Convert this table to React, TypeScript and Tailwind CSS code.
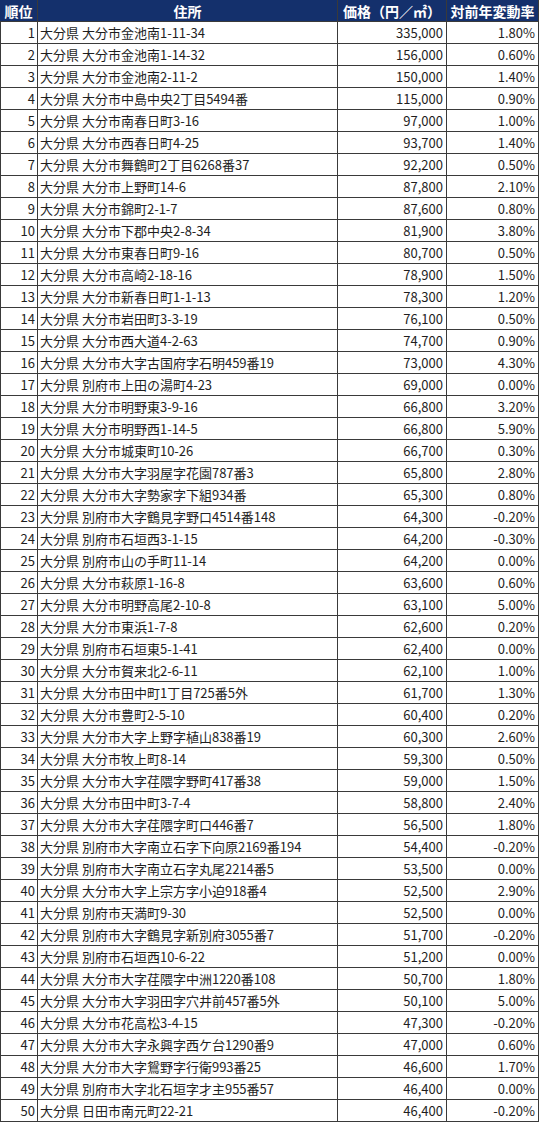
const rows: [string, string, string][] = [
  ["大分県 大分市金池南1-11-34", "335,000", "1.80%"],
  ["大分県 大分市金池南1-14-32", "156,000", "0.60%"],
  ["大分県 大分市金池南2-11-2", "150,000", "1.40%"],
  ["大分県 大分市中島中央2丁目5494番", "115,000", "0.90%"],
  ["大分県 大分市南春日町3-16", "97,000", "1.00%"],
  ["大分県 大分市西春日町4-25", "93,700", "1.40%"],
  ["大分県 大分市舞鶴町2丁目6268番37", "92,200", "0.50%"],
  ["大分県 大分市上野町14-6", "87,800", "2.10%"],
  ["大分県 大分市錦町2-1-7", "87,600", "0.80%"],
  ["大分県 大分市下郡中央2-8-34", "81,900", "3.80%"],
  ["大分県 大分市東春日町9-16", "80,700", "0.50%"],
  ["大分県 大分市高崎2-18-16", "78,900", "1.50%"],
  ["大分県 大分市新春日町1-1-13", "78,300", "1.20%"],
  ["大分県 大分市岩田町3-3-19", "76,100", "0.50%"],
  ["大分県 大分市西大道4-2-63", "74,700", "0.90%"],
  ["大分県 大分市大字古国府字石明459番19", "73,000", "4.30%"],
  ["大分県 別府市上田の湯町4-23", "69,000", "0.00%"],
  ["大分県 大分市明野東3-9-16", "66,800", "3.20%"],
  ["大分県 大分市明野西1-14-5", "66,800", "5.90%"],
  ["大分県 大分市城東町10-26", "66,700", "0.30%"],
  ["大分県 大分市大字羽屋字花園787番3", "65,800", "2.80%"],
  ["大分県 大分市大字勢家字下組934番", "65,300", "0.80%"],
  ["大分県 別府市大字鶴見字野口4514番148", "64,300", "-0.20%"],
  ["大分県 別府市石垣西3-1-15", "64,200", "-0.30%"],
  ["大分県 別府市山の手町11-14", "64,200", "0.00%"],
  ["大分県 大分市萩原1-16-8", "63,600", "0.60%"],
  ["大分県 大分市明野高尾2-10-8", "63,100", "5.00%"],
  ["大分県 大分市東浜1-7-8", "62,600", "0.20%"],
  ["大分県 別府市石垣東5-1-41", "62,400", "0.00%"],
  ["大分県 大分市賀来北2-6-11", "62,100", "1.00%"],
  ["大分県 大分市田中町1丁目725番5外", "61,700", "1.30%"],
  ["大分県 大分市豊町2-5-10", "60,400", "0.20%"],
  ["大分県 大分市大字上野字植山838番19", "60,300", "2.60%"],
  ["大分県 大分市牧上町8-14", "59,300", "0.50%"],
  ["大分県 大分市大字荏隈字野町417番38", "59,000", "1.50%"],
  ["大分県 大分市田中町3-7-4", "58,800", "2.40%"],
  ["大分県 大分市大字荏隈字町口446番7", "56,500", "1.80%"],
  ["大分県 別府市大字南立石字下向原2169番194", "54,400", "-0.20%"],
  ["大分県 別府市大字南立石字丸尾2214番5", "53,500", "0.00%"],
  ["大分県 大分市大字上宗方字小迫918番4", "52,500", "2.90%"],
  ["大分県 別府市天満町9-30", "52,500", "0.00%"],
  ["大分県 別府市大字鶴見字新別府3055番7", "51,700", "-0.20%"],
  ["大分県 別府市石垣西10-6-22", "51,200", "0.00%"],
  ["大分県 大分市大字荏隈字中洲1220番108", "50,700", "1.80%"],
  ["大分県 大分市大字羽田字穴井前457番5外", "50,100", "5.00%"],
  ["大分県 大分市花高松3-4-15", "47,300", "-0.20%"],
  ["大分県 大分市大字永興字西ケ台1290番9", "47,000", "0.60%"],
  ["大分県 大分市大字鴛野字行衛993番25", "46,600", "1.70%"],
  ["大分県 別府市大字北石垣字才主955番57", "46,400", "0.00%"],
  ["大分県 日田市南元町22-21", "46,400", "-0.20%"],
];

export default function App() {
  return (
    <div
      className="w-[540px] bg-white text-[13px] text-[#1e1e1e]"
      style={{ fontFamily: '"Noto Sans CJK JP", "Noto Sans", sans-serif' }}
    >
      <div className="grid grid-cols-[38px_300px_109px_92px] leading-none">
        {/* header */}
        <div className="flex h-[22px] items-center justify-center border-b border-r border-[#3a3a3a] bg-[#14306c] text-[14px] font-bold text-white">
          順位
        </div>
        <div className="flex h-[22px] items-center justify-center border-b border-r border-[#3a3a3a] bg-[#14306c] text-[14px] font-bold text-white">
          住所
        </div>
        <div className="flex h-[22px] items-center justify-center border-b border-r border-[#3a3a3a] bg-[#14306c] text-[14px] font-bold text-white">
          価格（円／㎡）
        </div>
        <div className="flex h-[22px] items-center justify-center border-b border-r border-[#3a3a3a] bg-[#14306c] text-[14px] font-bold text-white">
          対前年変動率
        </div>

        {rows.map(([addr, price, rate], i) => (
          <div key={i} className="contents">
            <div className="flex h-[22px] items-center justify-end border-b border-l border-r border-[#3a3a3a] pr-[2px]">
              {i + 1}
            </div>
            <div className="flex h-[22px] items-center overflow-hidden whitespace-nowrap border-b border-r border-[#3a3a3a] pl-[2px]">
              {addr}
            </div>
            <div className="flex h-[22px] items-center justify-end border-b border-r border-[#3a3a3a] pr-[3px]">
              {price}
            </div>
            <div className="flex h-[22px] items-center justify-end border-b border-r border-[#3a3a3a] pr-[3px]">
              {rate}
            </div>
          </div>
        ))}
      </div>
    </div>
  );
}
